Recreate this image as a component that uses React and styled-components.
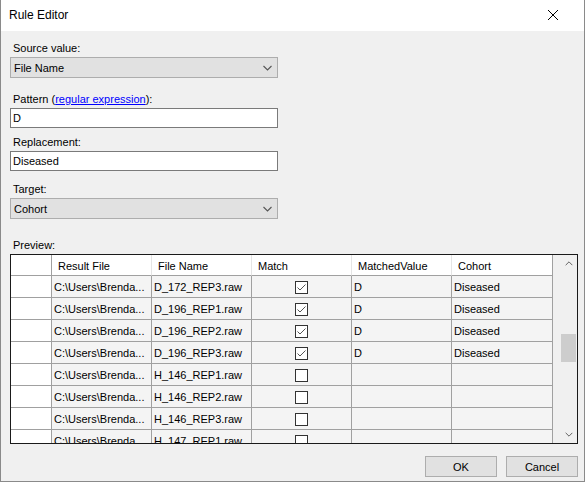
import React from 'react';
import styled, { createGlobalStyle } from 'styled-components';

const Global = createGlobalStyle`
  html, body {
    margin: 0;
    padding: 0;
    background: #ffffff;
  }
  * {
    box-sizing: border-box;
  }
`;

const Window = styled.div`
  width: 585px;
  height: 482px;
  border: 1px solid #8a8a8a;
  border-top: none;
  display: flex;
  flex-direction: column;
  font-family: 'Liberation Sans', Arial, sans-serif;
  font-size: 11px;
  color: #000;
  background: #f0f0f0;
  overflow: hidden;
`;

const TitleBar = styled.div`
  height: 31px;
  flex: none;
  background: #fff;
  display: flex;
  align-items: center;
  justify-content: space-between;
  padding: 0 0 1px 8px;
  font-size: 12px;
`;

const CloseBtn = styled.div`
  width: 46px;
  height: 31px;
  display: flex;
  align-items: center;
  justify-content: center;
  margin-right: 8px;
  svg {
    width: 10px;
    height: 10px;
  }
`;

const Body = styled.div`
  flex: 1;
  display: flex;
  flex-direction: column;
  padding: 10px 6px 0 9px;
`;

const Label = styled.div`
  height: 14px;
  line-height: 14px;
  margin-top: ${(p) => p.$top || 0}px;
  margin-bottom: ${(p) => p.$bottom ?? 2}px;
  padding-left: 3px;
  a {
    color: #0000ff;
    text-decoration: underline;
  }
`;

const Combo = styled.div`
  width: 268px;
  height: 21px;
  background: #e1e1e1;
  border: 1px solid #adadad;
  display: flex;
  align-items: center;
  justify-content: space-between;
  padding: 0 5px 0 3px;
  svg {
    width: 9px;
    height: 6px;
  }
`;

const TextBox = styled.div`
  width: 268px;
  height: 20px;
  background: #fff;
  border: 1px solid #7a7a7a;
  display: flex;
  align-items: center;
  padding-left: 2px;
`;

const GridBox = styled.div`
  width: 568px;
  height: 190px;
  border: 1px solid #1a1a1a;
  background: #f0f0f0;
  display: flex;
  overflow: hidden;
`;

const Table = styled.div`
  flex: 1;
  display: flex;
  flex-direction: column;
  overflow: hidden;
`;

const Row = styled.div`
  display: grid;
  grid-template-columns: 41px 100px 100px 100px 100px 101px;
  height: ${(p) => (p.$head ? 21 : 22)}px;
  flex: none;
`;

const HeadCell = styled.div`
  background: #fff;
  border-right: 1px solid ${(p) => (p.$corner ? '#a0a0a0' : '#e5e5e5')};
  border-bottom: 1px solid #a0a0a0;
  padding: 2px 0 0 6px;
  display: flex;
  align-items: center;
  white-space: nowrap;
`;

const Cell = styled.div`
  background: ${(p) => (p.$rowHead ? '#fff' : '#f4f4f4')};
  border-right: 1px solid #a0a0a0;
  border-bottom: 1px solid #a0a0a0;
  padding: 1px 0 0 2px;
  display: flex;
  align-items: center;
  justify-content: ${(p) => (p.$center ? 'center' : 'flex-start')};
  white-space: nowrap;
  overflow: hidden;
`;

const Check = styled.div`
  width: 13px;
  height: 13px;
  margin-left: -3px;
  border: 1px solid #333;
  background: #fff;
  display: flex;
  align-items: center;
  justify-content: center;
  svg {
    width: 9px;
    height: 7px;
  }
`;

const ScrollBar = styled.div`
  width: 17px;
  flex: none;
  background: #f0f0f0;
  display: flex;
  flex-direction: column;
  align-items: center;
  justify-content: space-between;
  padding: 6px 0;
  position: relative;
  svg {
    width: 8px;
    height: 5px;
  }
`;

const Thumb = styled.div`
  position: absolute;
  left: 1px;
  right: 1px;
  top: 79px;
  height: 28px;
  background: #cdcdcd;
`;

const Footer = styled.div`
  display: flex;
  justify-content: flex-end;
  gap: 9px;
  margin-top: 12px;
`;

const Button = styled.div`
  width: 72px;
  height: 21px;
  background: #e1e1e1;
  border: 1px solid #adadad;
  display: flex;
  align-items: center;
  justify-content: center;
`;

const rows = [
  ['D_172_REP3.raw', true],
  ['D_196_REP1.raw', true],
  ['D_196_REP2.raw', true],
  ['D_196_REP3.raw', true],
  ['H_146_REP1.raw', false],
  ['H_146_REP2.raw', false],
  ['H_146_REP3.raw', false],
  ['H_147_REP1.raw', false],
];

const Chevron = ({ up }) => (
  <svg viewBox="0 0 9 6">
    <polyline
      points={up ? '0.5,5 4.5,1 8.5,5' : '0.5,1 4.5,5 8.5,1'}
      fill="none"
      stroke="#555"
      strokeWidth="1.1"
    />
  </svg>
);

export default function App() {
  return (
    <>
      <Global />
      <Window>
        <TitleBar>
          <span>Rule Editor</span>
          <CloseBtn>
            <svg viewBox="0 0 10 10">
              <path d="M0 0L10 10M10 0L0 10" stroke="#000" strokeWidth="1" />
            </svg>
          </CloseBtn>
        </TitleBar>
        <Body>
          <Label>Source value:</Label>
          <Combo>
            <span>File Name</span>
            <Chevron />
          </Combo>

          <Label $top={14}>
            Pattern (<a href="#0">regular expression</a>):
          </Label>
          <TextBox>D</TextBox>

          <Label $top={7}>Replacement:</Label>
          <TextBox>Diseased</TextBox>

          <Label $top={11}>Target:</Label>
          <Combo>
            <span>Cohort</span>
            <Chevron />
          </Combo>

          <Label $top={19} $bottom={2}>Preview:</Label>
          <GridBox>
            <Table>
              <Row $head>
                <HeadCell $corner />
                <HeadCell>Result File</HeadCell>
                <HeadCell>File Name</HeadCell>
                <HeadCell>Match</HeadCell>
                <HeadCell>MatchedValue</HeadCell>
                <HeadCell $corner>Cohort</HeadCell>
              </Row>
              {rows.map(([name, hit]) => (
                <Row key={name}>
                  <Cell $rowHead />
                  <Cell>C:\Users\Brenda...</Cell>
                  <Cell>{name}</Cell>
                  <Cell $center>
                    <Check>
                      {hit && (
                        <svg viewBox="0 0 9 7">
                          <polyline points="0.5,3.5 3,6 8.5,0.5" fill="none" stroke="#555" strokeWidth="1" />
                        </svg>
                      )}
                    </Check>
                  </Cell>
                  <Cell>{hit ? 'D' : ''}</Cell>
                  <Cell>{hit ? 'Diseased' : ''}</Cell>
                </Row>
              ))}
            </Table>
            <ScrollBar>
              <Chevron up />
              <Thumb />
              <Chevron />
            </ScrollBar>
          </GridBox>

          <Footer>
            <Button>OK</Button>
            <Button>Cancel</Button>
          </Footer>
        </Body>
      </Window>
    </>
  );
}
